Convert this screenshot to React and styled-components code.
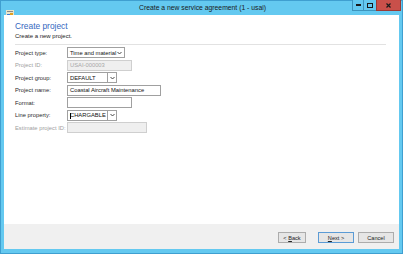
import React from 'react'
import styled, { createGlobalStyle } from 'styled-components'

const Global = createGlobalStyle`
  html, body { margin: 0; padding: 0; background: #fff; }
  body { font-family: "Liberation Sans", Arial, sans-serif; }
  * { box-sizing: border-box; }
`

const Frame = styled.div`
  width: 403px;
  height: 254px;
  background: #64c9f0;
  border: 1px solid #3f9fd0;
  display: flex;
  flex-direction: column;
  padding: 0 3px 4px 3px;
`

const TitleBar = styled.div`
  height: 14px;
  display: grid;
  grid-template-columns: 1fr auto 1fr;
  align-items: start;
  margin-right: -2px;
`

const AppIcon = styled.div`
  margin: 3px 0 0 2px;
  width: 8px;
  height: 8px;
`

const Title = styled.div`
  font-size: 6.8px;
  color: #1a1a1a;
  line-height: 13px;
  white-space: nowrap;
`

const Controls = styled.div`
  justify-self: end;
  display: flex;
  margin-top: -1px;
`

const CapButton = styled.div`
  width: ${p => p.w}px;
  height: 11px;
  display: flex;
  align-items: center;
  justify-content: center;
  background: ${p => (p.close ? '#c9504a' : '#64c9f0')};
  border: 1px solid ${p => (p.close ? '#9c3a35' : '#3d94bd')};
  border-top: none;
  margin-left: -1px;
`

const Body = styled.div`
  flex: 1;
  background: #fff;
  padding: 6px 13px 0 11px;
  display: flex;
  flex-direction: column;
`

const Heading = styled.div`
  font-size: 8.4px;
  color: #3568c0;
  line-height: 10px;
`

const Sub = styled.div`
  font-size: 6px;
  color: #222;
  line-height: 8px;
  margin-top: 1px;
`

const Rule = styled.div`
  height: 1px;
  background: #e2e2e2;
  margin-top: 4px;
`

const Form = styled.div`
  display: grid;
  grid-template-columns: 52px auto;
  grid-auto-rows: 11.5px;
  row-gap: 1px;
  margin-top: 2px;
  justify-items: start;
  align-items: center;
`

const Label = styled.div`
  font-size: 5.8px;
  color: ${p => (p.disabled ? '#a0a0a0' : '#2a2a2a')};
  white-space: nowrap;
`

const Field = styled.div`
  width: ${p => p.w}px;
  height: 11px;
  border: 1px solid ${p => (p.disabled ? '#cfcfcf' : '#a0a0a0')};
  background: ${p => (p.disabled ? '#efefef' : '#fff')};
  font-size: 5.8px;
  color: ${p => (p.disabled ? '#a8a8a8' : '#111')};
  display: flex;
  align-items: center;
  padding-left: 2px;
  white-space: nowrap;
  position: relative;
`

const Combo = styled.div`
  display: flex;
`

const ArrowBox = styled.div`
  width: 9px;
  height: 11px;
  border: 1px solid #a0a0a0;
  border-left: none;
  display: flex;
  align-items: center;
  justify-content: center;
  background: #fff;
`

const InlineArrow = styled.span`
  margin-left: auto;
  margin-right: 2px;
  display: flex;
`

const Caret = styled.span`
  position: absolute;
  left: 2px;
  top: 2px;
  width: 1px;
  height: 6px;
  background: #000;
`

const Footer = styled.div`
  height: 25px;
  background: #f0f0f0;
  display: flex;
  justify-content: flex-end;
  align-items: flex-start;
  gap: 4px;
  padding: 8px 5px 0 0;
`

const Button = styled.div`
  width: ${p => p.w}px;
  height: 11px;
  border: 1px solid ${p => (p.primary ? '#5b9bd5' : '#acacac')};
  background: #e6e6e6;
  font-size: 5.6px;
  color: #222;
  display: flex;
  align-items: center;
  justify-content: center;
  white-space: pre;
  margin-left: ${p => p.gapLeft || 0}px;
`

const Chevron = () => (
  <svg width="5" height="4" viewBox="0 0 5 4">
    <path d="M0.5 1 L2.5 3 L4.5 1" fill="none" stroke="#333" strokeWidth="0.9" />
  </svg>
)

const rows = [
  { label: 'Project type:', kind: 'select', w: 58, value: 'Time and material' },
  { label: 'Project ID:', disabled: true, w: 65, value: 'USAI-000003' },
  { label: 'Project group:', kind: 'combo', w: 41, value: 'DEFAULT' },
  { label: 'Project name:', w: 94, value: 'Coastal Aircraft Maintenance' },
  { label: 'Format:', w: 65, value: '' },
  { label: 'Line property:', kind: 'combo', w: 41, value: 'CHARGABLE', caret: true },
  { label: 'Estimate project ID:', disabled: true, w: 80, value: '' },
]

const renderField = r => {
  if (r.kind === 'select') {
    return (
      <Field w={r.w}>
        {r.value}
        <InlineArrow><Chevron /></InlineArrow>
      </Field>
    )
  }
  if (r.kind === 'combo') {
    return (
      <Combo>
        <Field w={r.w}>
          {r.caret && <Caret />}
          {r.value}
        </Field>
        <ArrowBox><Chevron /></ArrowBox>
      </Combo>
    )
  }
  return <Field w={r.w} disabled={r.disabled}>{r.value}</Field>
}

export default function App() {
  return (
    <>
      <Global />
      <Frame>
        <TitleBar>
          <AppIcon>
            <svg width="8" height="8" viewBox="0 0 8 8">
              <rect x="0" y="0" width="8" height="8" fill="#e9e3c9" />
              <rect x="1" y="4" width="3" height="3" fill="#3b7bd0" />
              <rect x="4" y="3" width="3" height="4" fill="#e0a020" />
              <rect x="1" y="1" width="6" height="1" fill="#888" />
            </svg>
          </AppIcon>
          <Title>Create a new service agreement (1 - usai)</Title>
          <Controls>
            <CapButton w={12}>
              <svg width="5" height="2"><rect width="5" height="2" fill="#1a1a1a" /></svg>
            </CapButton>
            <CapButton w={14}>
              <svg width="6" height="5"><rect x="0.5" y="0.5" width="5" height="4" fill="none" stroke="#1a1a1a" /></svg>
            </CapButton>
            <CapButton w={25} close>
              <svg width="5" height="5" viewBox="0 0 5 5">
                <path d="M0.5 0.5 L4.5 4.5 M4.5 0.5 L0.5 4.5" stroke="#1a1a1a" strokeWidth="1.2" />
              </svg>
            </CapButton>
          </Controls>
        </TitleBar>
        <Body>
          <Heading>Create project</Heading>
          <Sub>Create a new project.</Sub>
          <Rule />
          <Form>
            {rows.map(r => (
              <React.Fragment key={r.label}>
                <Label disabled={r.disabled}>{r.label}</Label>
                {renderField(r)}
              </React.Fragment>
            ))}
          </Form>
        </Body>
        <Footer>
          <Button w={28}>{'< '}<u>B</u>ack</Button>
          <Button w={36} primary gapLeft={8}><u>N</u>ext{' >'}</Button>
          <Button w={36}>Cancel</Button>
        </Footer>
      </Frame>
    </>
  )
}
